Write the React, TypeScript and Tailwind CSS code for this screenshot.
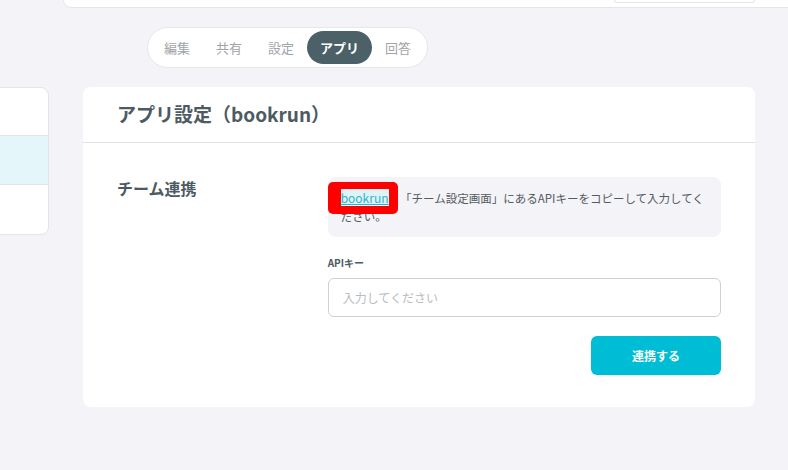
const tabs = ['編集', '共有', '設定', 'アプリ', '回答'];

export default function App() {
  return (
    <div
      className="h-[470px] w-[788px] overflow-hidden bg-[#f4f4f8] text-[#4c5a62]"
      style={{ fontFamily: '"Noto Sans CJK JP", "Noto Sans", sans-serif' }}
    >
      {/* top bar (scrolled away) */}
      <div className="ml-[63px] mr-[-20px] h-[8px] rounded-b-xl border border-t-0 border-[#e4e4ea] bg-white">
        <div className="ml-[550px] h-[3px] w-[141px] rounded-b-md border border-t-0 border-[#e4e4ea]" />
      </div>

      {/* tabs */}
      <div className="ml-[147px] mt-[19px] flex w-fit rounded-full border border-[#e6e6eb] bg-white p-[3px]">
        {tabs.map((t) => (
          <div
            key={t}
            className={
              t === 'アプリ'
                ? 'flex h-[33px] items-center rounded-full bg-[#4b6067] px-[13px] text-[13px] font-bold text-white'
                : 'flex h-[33px] items-center px-[13px] text-[13px] text-[#9fa4a8]'
            }
          >
            {t}
          </div>
        ))}
      </div>

      <div className="mt-[19px] flex items-start">
        {/* side list */}
        <div className="ml-[-10px] w-[59px] overflow-hidden rounded-lg border border-[#e3e3e8] bg-white">
          <div className="h-[48px] border-b border-[#e3e3e8]" />
          <div className="h-[49px] border-b border-[#e3e3e8] bg-[#e5f6fa]" />
          <div className="h-[49px]" />
        </div>

        {/* main card */}
        <div className="ml-[34px] w-[672px] rounded-lg bg-white">
          <div className="flex h-[56px] items-center border-b border-[#e2e2e6] px-[34px]">
            <h1 className="text-[19px] font-bold">アプリ設定（bookrun）</h1>
          </div>
          <div className="flex px-[34px] pb-[32px] pt-[34px]">
            <div className="w-[211px] text-[16px] font-bold leading-[22px]">チーム連携</div>
            <div className="w-[394px]">
              <div className="relative rounded-lg bg-[#f3f3f8] py-[12px] pl-[13px] pr-[12px] text-[11.5px] leading-[18px] text-[#555b60]">
                <div className="absolute left-0 top-[5px] z-[1] h-[32px] w-[70px] rounded-[5px] bg-[#ff0000]" />
                <a className="relative z-[2] mr-[9px] bg-[#dff3f7] text-[12px] text-[#2bb5cf] underline">bookrun</a>{' '}
                「チーム設定画面」にあるAPIキーをコピーして入力してください。
              </div>
              <div className="mt-[18px] text-[10px] font-bold leading-[16px]">APIキー</div>
              <input
                className="mt-[7px] h-[39px] w-full rounded-md border border-[#cfd0d2] px-[14px] text-[12px] outline-none placeholder:text-[#b9bcbf]"
                placeholder="入力してください"
              />
              <div className="mt-[19px] flex justify-end">
                <button className="h-[39px] w-[130px] rounded-md bg-[#00bdd6] text-[12px] font-bold text-white">
                  連携する
                </button>
              </div>
            </div>
          </div>
        </div>
      </div>
    </div>
  );
}
